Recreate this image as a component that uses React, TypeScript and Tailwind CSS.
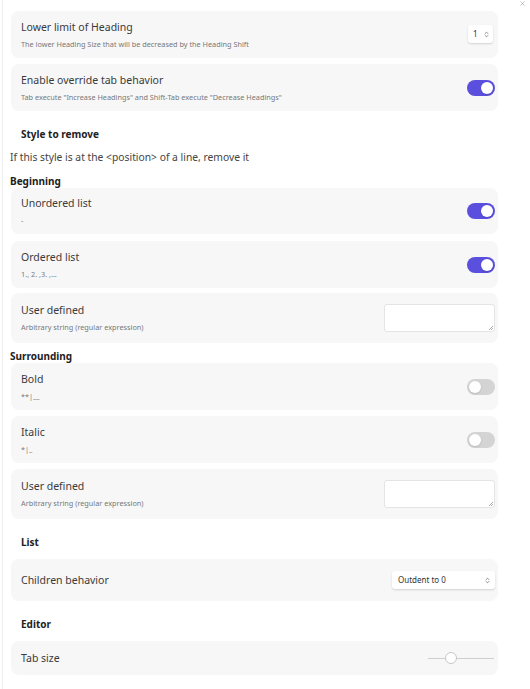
import { ChevronsUpDown, X } from 'lucide-react';

const FONT = { fontFamily: '"Noto Sans", "Open Sans", sans-serif' };

function Toggle({ on }: { on: boolean }) {
    return (
        <div
            className={
                'w-[28px] h-[16px] rounded-full flex items-center px-[2px] ' +
                (on ? 'bg-[#5b50de] justify-end' : 'bg-[#d4d4d4] justify-start')
            }
        >
            <div className="w-[12px] h-[12px] rounded-full bg-white shadow-sm" />
        </div>
    );
}

function SmallSelect({ label, wide }: { label: string; wide?: boolean }) {
    return (
        <div
            className={
                'h-[18px] bg-white rounded-[3px] shadow-[0_1px_2px_rgba(0,0,0,0.15)] flex items-center justify-between text-[8px] text-[#333] ' +
                (wide ? 'w-[103px] pl-[6px] pr-[4px]' : 'w-[25px] h-[15px] pl-[5px] pr-[3px]')
            }
        >
            <span>{label}</span>
            <ChevronsUpDown className="w-[7px] h-[7px] text-[#666]" strokeWidth={2.5} />
        </div>
    );
}

function TextBox() {
    return (
        <div className="relative w-[111px] h-[28px] bg-white rounded-[3px] border border-[#e4e4e4]">
            <svg className="absolute right-[1px] bottom-[1px] w-[5px] h-[5px]" viewBox="0 0 5 5">
                <path d="M5 1 L1 5 M5 3 L3 5" stroke="#999" strokeWidth="0.8" />
            </svg>
        </div>
    );
}

function Slider() {
    return (
        <div className="relative w-[66px] h-[14px] flex items-center">
            <div className="w-full h-px bg-[#cfcfcf]" />
            <div className="absolute left-[17px] w-[12px] h-[12px] rounded-full bg-white border border-[#c8c8c8]" />
        </div>
    );
}

function Card({
    title,
    desc,
    control,
    h,
    mt,
}: {
    title: string;
    desc?: string;
    control: React.ReactNode;
    h: string;
    mt: string;
}) {
    return (
        <div className={`ml-px bg-[#f7f7f7] rounded-[8px] pl-[10px] pr-[3px] flex items-center justify-between ${h} ${mt}`}>
            <div className="flex flex-col">
                <div className="text-[10.5px] leading-[15px] text-[#3a3a3a]">{title}</div>
                {desc !== undefined && (
                    <div className="text-[7.3px] leading-[12px] mt-[3px] text-[#777]">{desc}</div>
                )}
            </div>
            {control}
        </div>
    );
}

export default function App() {
    return (
        <div className="relative w-[530px] h-[689px] bg-white overflow-hidden" style={FONT}>
            <X className="absolute top-0 right-[4px] w-[7px] h-[7px] text-[#999]" strokeWidth={2} />
            <div className="ml-[2px] h-full border-l border-[#ededed] pl-[7px] pr-[32px] pt-[11px] flex flex-col">
                <Card
                    h="h-[47px]"
                    mt="mt-0"
                    title="Lower limit of Heading"
                    desc="The lower Heading Size that will be decreased by the Heading Shift"
                    control={<div className="mr-[2px] mb-[1px]"><SmallSelect label="1" /></div>}
                />
                <Card
                    h="h-[47px]"
                    mt="mt-[6px]"
                    title="Enable override tab behavior"
                    desc={'Tab execute "Increase Headings" and Shift-Tab execute "Decrease Headings"'}
                    control={<Toggle on />}
                />

                <div className="mt-[16px] pl-[11px] text-[10px] leading-[14px] font-bold text-[#222]">Style to remove</div>
                <div className="mt-[9px] text-[10.3px] leading-[14px] text-[#444]">
                    If this style is at the &lt;position&gt; of a line, remove it
                </div>
                <div className="mt-[10px] text-[10px] leading-[14px] font-bold text-[#222]">Beginning</div>

                <Card h="h-[46px]" mt="mt-0" title="Unordered list" desc="-" control={<Toggle on />} />
                <Card h="h-[47px]" mt="mt-[7px]" title="Ordered list" desc="1., 2. ,3. ,..." control={<Toggle on />} />
                <Card
                    h="h-[50px]"
                    mt="mt-[5px]"
                    title="User defined"
                    desc="Arbitrary string (regular expression)"
                    control={<TextBox />}
                />

                <div className="mt-[6px] text-[10px] leading-[14px] font-bold text-[#222]">Surrounding</div>

                <Card h="h-[47px]" mt="mt-0" title="Bold" desc="**|__" control={<Toggle on={false} />} />
                <Card h="h-[47px]" mt="mt-[6px]" title="Italic" desc="*|_" control={<Toggle on={false} />} />
                <Card
                    h="h-[50px]"
                    mt="mt-[6px]"
                    title="User defined"
                    desc="Arbitrary string (regular expression)"
                    control={<TextBox />}
                />

                <div className="mt-[16px] pl-[11px] text-[10px] leading-[14px] font-bold text-[#222]">List</div>
                <Card
                    h="h-[42px]"
                    mt="mt-[10px]"
                    title="Children behavior"
                    control={<SmallSelect label="Outdent to 0" wide />}
                />

                <div className="mt-[16px] pl-[11px] text-[10px] leading-[14px] font-bold text-[#222]">Editor</div>
                <Card h="h-[34px]" mt="mt-[10px]" title="Tab size" control={<div className="mr-[1px]"><Slider /></div>} />
            </div>
        </div>
    );
}
